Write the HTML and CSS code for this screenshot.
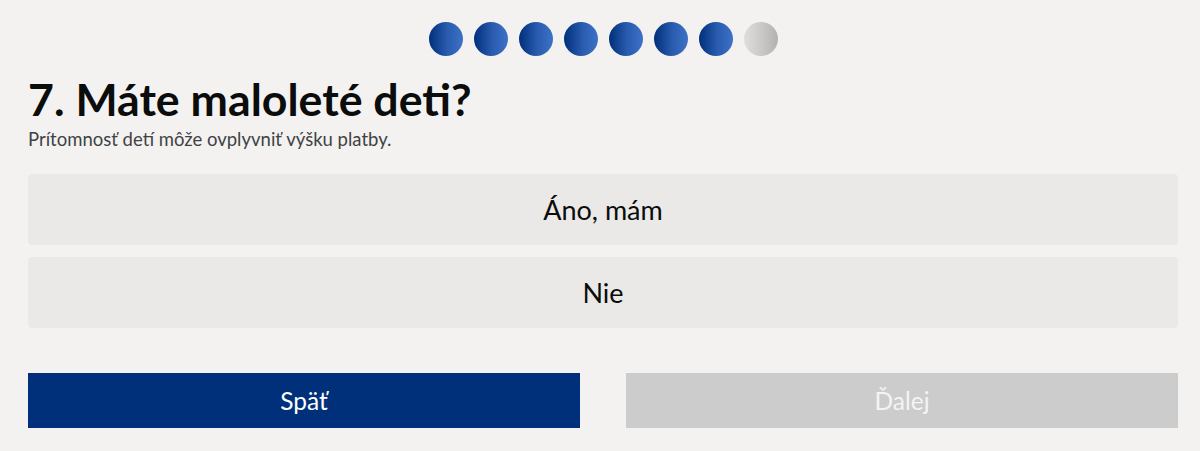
FILE: index.html
```html
<!DOCTYPE html>
<html lang="sk">
<head>
<meta charset="utf-8">
<title>Otázka 7</title>
<link rel="stylesheet" href="styles.css">
</head>
<body>
<main class="wizard">
  <div class="progress">
    <span class="dot done"></span>
    <span class="dot done"></span>
    <span class="dot done"></span>
    <span class="dot done"></span>
    <span class="dot done"></span>
    <span class="dot done"></span>
    <span class="dot done"></span>
    <span class="dot todo"></span>
  </div>
  <h1 class="title">7. Máte maloleté deti?</h1>
  <p class="subtitle">Prítomnosť detí môže ovplyvniť výšku platby.</p>
  <div class="options">
    <button class="option">Áno, mám</button>
    <button class="option">Nie</button>
  </div>
  <div class="nav">
    <button class="btn back">Späť</button>
    <button class="btn next" disabled>Ďalej</button>
  </div>
</main>
</body>
</html>
```
FILE: styles.css
```css
html, body {
  margin: 0;
  padding: 0;
  background: #f3f2f0;
}
body {
  font-family: Lato, "Open Sans", sans-serif;
  color: #0b0c0c;
}
.wizard {
  width: 1150px;
  margin-left: 28px;
  padding-top: 22px;
}
.progress {
  display: flex;
  justify-content: center;
  gap: 11px;
}
.dot {
  width: 34px;
  height: 34px;
  border-radius: 50%;
  display: block;
}
.dot.done {
  background: linear-gradient(90deg, #00307a 0%, #2a5cb0 55%, #3c72c6 100%);
}
.dot.todo {
  background: linear-gradient(90deg, #dedede 0%, #c6c5c4 60%, #b3b1af 100%);
}
.title {
  margin: 17px 0 0;
  font-size: 44.7px;
  line-height: 52px;
  font-weight: 700;
  color: #0b0c0c;
}
.subtitle {
  margin: 3px 0 0;
  font-size: 18.5px;
  line-height: 22px;
  color: #3f4245;
}
.options {
  margin-top: 24px;
  display: flex;
  flex-direction: column;
  gap: 12px;
}
.option {
  height: 71px;
  border: 0;
  border-radius: 4px;
  background: #eae9e7;
  font-family: inherit;
  font-size: 27px;
  color: #0b0c0c;
  cursor: pointer;
}
.nav {
  margin-top: 45px;
  display: flex;
  gap: 46px;
}
.btn {
  flex: 1;
  height: 55px;
  border: 0;
  font-family: inherit;
  font-size: 24.5px;
  color: #ffffff;
}
.btn.back {
  background: #00307a;
}
.btn.next {
  background: #cccccc;
  color: #f4f4f4;
}
```
